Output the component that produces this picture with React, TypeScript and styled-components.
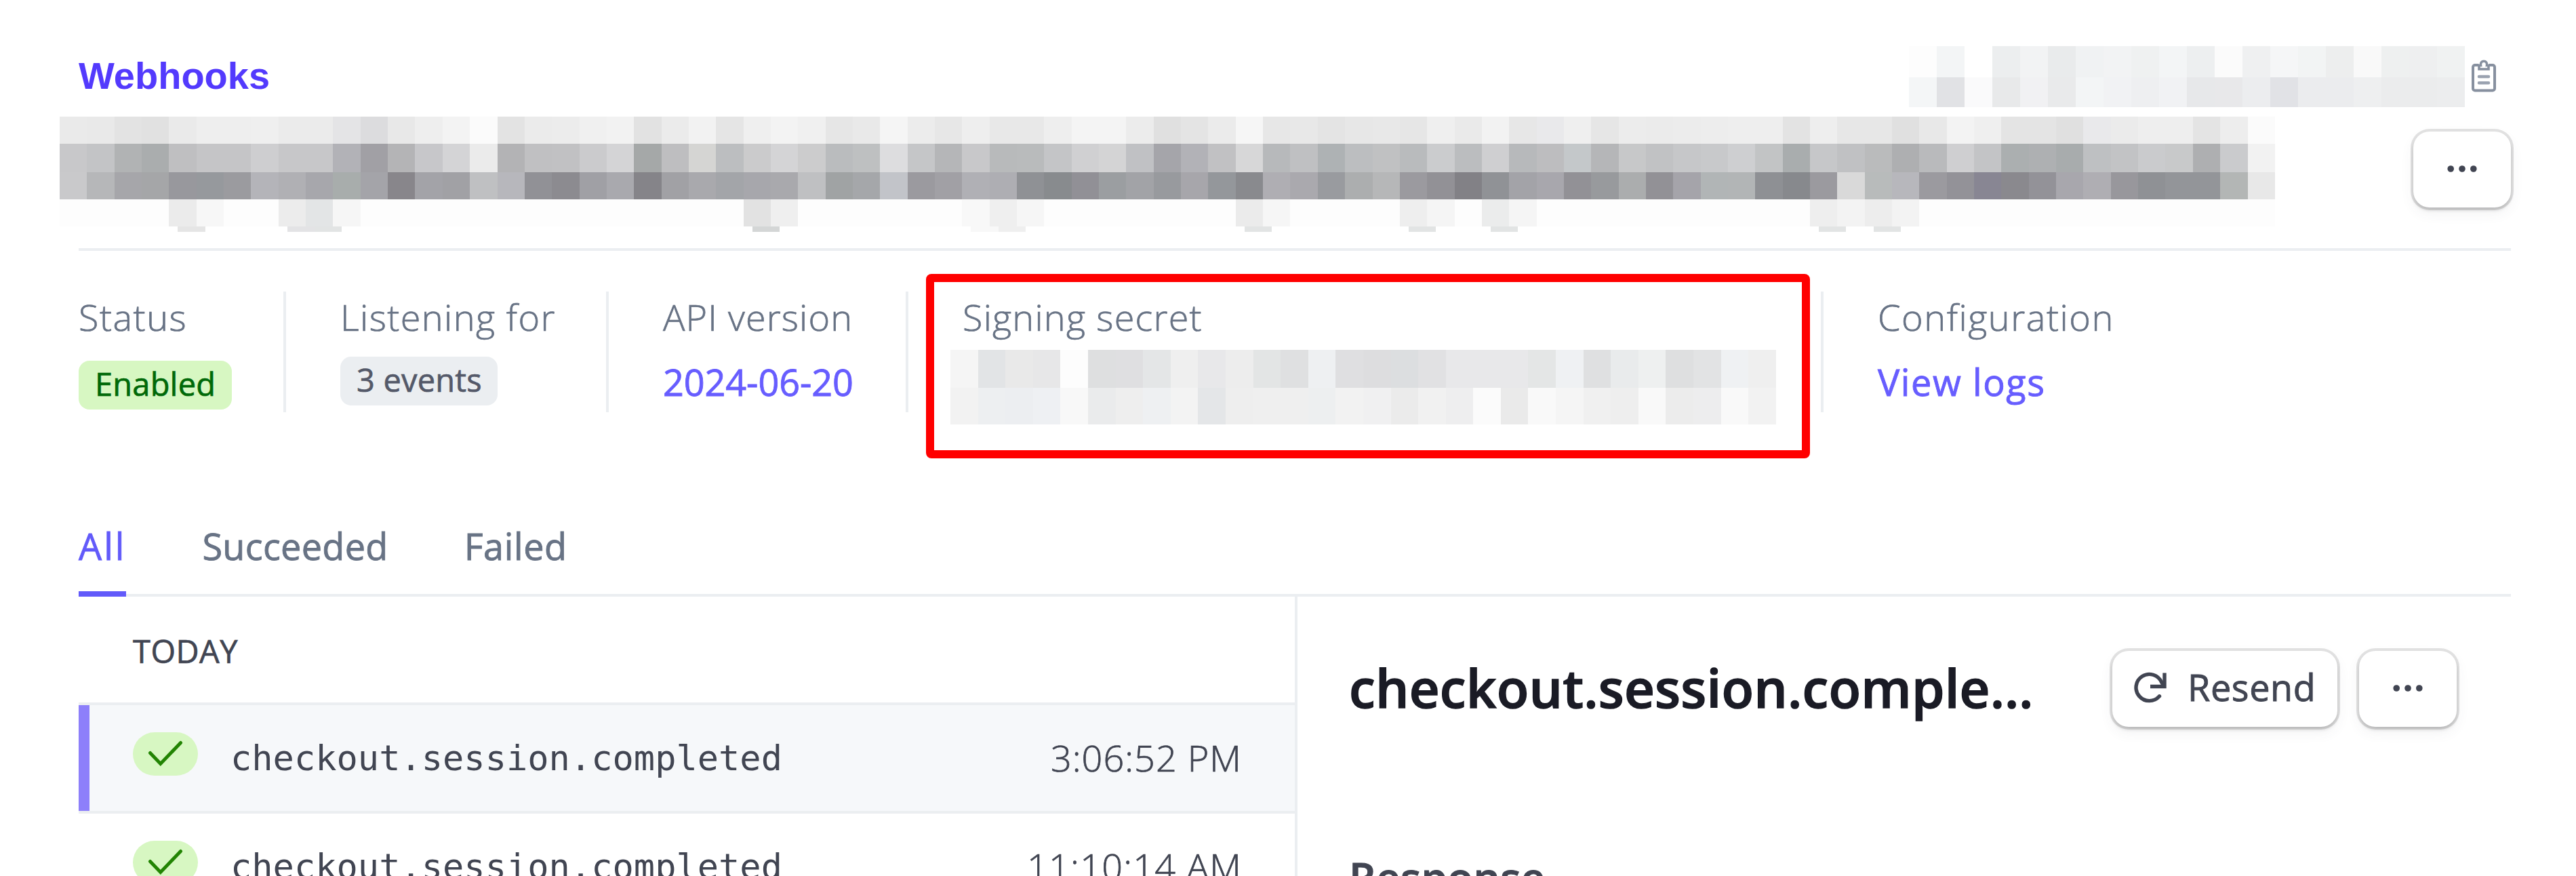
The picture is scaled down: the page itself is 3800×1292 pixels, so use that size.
import React from "react";
import styled, { createGlobalStyle } from "styled-components";

const SANS = `"Open Sans", "Noto Sans", sans-serif`;
const MONO = `"DejaVu Sans Mono", monospace`;
const LINE = "#ebeef1";

const GlobalStyle = createGlobalStyle`
  *, *::before, *::after { box-sizing: border-box; }
  body { margin: 0; background: #fff; }
`;

const Page = styled.div`
  width: 3800px;
  height: 1292px;
  overflow: hidden;
  padding: 68px 96px 0 116px;
  background: #fff;
  color: #414552;
  font-family: ${SANS};
`;

/* ---------- redacted values ---------- */

const Mosaic = styled.div<{ $width: number; $pull?: number; $top?: number }>`
  flex: none;
  width: ${(p) => p.$width}px;
  margin-left: ${(p) => p.$pull ?? 0}px;
  margin-top: ${(p) => p.$top ?? 0}px;
`;

const MosaicRow = styled.div<{ $height: number; $shift?: number }>`
  display: flex;
  height: ${(p) => p.$height}px;
  margin-left: ${(p) => p.$shift ?? 0}px;
  margin-right: -${(p) => p.$shift ?? 0}px;
`;

const Tile = styled.div.attrs<{ $tone: string }>((p) => ({
  style: { backgroundColor: p.$tone },
}))<{ $tone: string }>`
  flex: 1 1 0;
`;

type Band = { height: number; tones: string[]; shift?: number };

const parse = (s: string) =>
  s.trim().split(/\s+/).map((t) => `#${t.length === 2 ? t + t + t : t}`);

const sparse = (count: number, base: string, marks: Record<number, string>) =>
  Array.from({ length: count }, (_, i) => marks[i] ?? base);

function Redacted({ bands, width, pull, top }: { bands: Band[]; width: number; pull?: number; top?: number }) {
  return (
    <Mosaic $width={width} $pull={pull} $top={top} aria-hidden>
      {bands.map((b, r) => (
        <MosaicRow key={r} $height={b.height} $shift={b.shift}>
          {b.tones.map((t, i) => (
            <Tile key={i} $tone={t} />
          ))}
        </MosaicRow>
      ))}
    </Mosaic>
  );
}

const idBands: Band[] = [
  { height: 46, tones: parse("fd f3f5f6 ff eceeef f2f3f4 e9ebec f0f2f3 f2f3f4 eff1f1 f3f5f6 edeff0 fb eff0f1 f5f6f7 f2f4f4 edeeee f9 eef0f0 eeeff0 f0f2f2") },
  { height: 44, tones: parse("f4f6f7 e1e2e5 fafafb e8e9ea f1f1f3 e9eaeb f3f5f6 f1f2f4 eeeff1 f1f2f4 e7e8ea e8e8ea ecedef e1e2e6 ebecee ebecee eeeff0 ebeced ebeced ecedee") },
];

const urlBands: Band[] = [
  { height: 40, tones: parse(`ea e9 e3 e1 ea ee ee ef eb eb e4e4e6 dcdcde e8 ee f3 fb e3 eb ec f0 f2 e2
    eb f2 e5 ef f3 f0 e6 e9 f5 ec e7 ee e8 e8 ee f4 f4 ec e0 e4 eb f6 e7 e8 e4 e7 e8 e6
    ef ea f2 e7 e9e9eb ef e6 ec eb ec ed ee ee e3 ee e7 e7 e0 e8 f3 ef e4 e4 e0 e9e9eb eb ee ee e4 ed fb`) },
  { height: 42, tones: parse(`c8c8ca c3c4c6 b1b3b4 aaadae bfbfc1 c5c5c7 c5c5c7 ceced0 c7c7c9 c7c7c9 b2b2b7 a1a0a5 b4b4b6 c7c7ca d4d4d6 eb b3b3b5 c0c0c2 c1c1c3 cbcbcd d4d4d6 a5a8a8
    bebec0 d5d5d3 bcbec0 cbcbcc d4d4d6 cccccd babcbe bec0c1 dddddf c5c6c8 b5b6b8 c8c8ca b8babb b9bbbc c4c5c7 d0d0d2 d4d4d5 c0c1c4 a5a5aa b2b2b7 c1c1c3 d7d7d8 b7b9bb bfc0c2 aeb2b4 bcbec0 c0c1c2 b9bbbd
    cbccce bbbdbf cfcfd1 b7b9bb bdbdbf c4c8ca b5b6b8 c7c8c9 c1c2c4 c6c7c9 c8c9cb cecfd1 c2c4c5 a9adae c6c7c9 c0c1c3 babbbc aeafb1 b9babc cfcfd1 c3c4c6 abafb0 aeb0b2 a8acad bec0c2 c2c3c5 cacbcd c8c9ca aeafb1 cacbcd f2`) },
  { height: 40, tones: parse(`c9c9cb b6b7b9 a6a6aa a5a6a8 98989d 96999d 9b9b9f b4b4b9 b0b0b4 a7a7ac a8adac a4a4a9 88868b a3a3a8 a1a1a5 bfc0c2 b7b7bc 919196 8c8b90 a0a0a5 a9a9ae 858489
    a1a1a5 a9a9ad a3a5a9 a7a7ac a9a9ad bfc0c2 a0a3a4 a5a7aa c2c4c9 9b9a9f a1a0a5 b0b0b5 aeaeb3 8f9195 888b8e 919096 9b9ea1 a2a3a7 989a9e a7a6ab 94979b 898a8e afaeb3 aaa9ae 999b9f acaeaf b6b7b8 9b9a9f
    929196 828186 909296 a3a3a8 a8a7ad 929196 989a9d abadae 929196 a5a4aa b1b5b6 b2b5b6 8e9094 87898d 9b9a9f d9 b8bbbb b7b7bc 9b9a9f 939298 888693 8a898e 939298 a8a7ad afaeb3 98979c 8f9195 939599 939599 b3b6b5 e8`) },
  { height: 40, tones: sparse(81, "#fdfdfd", { 4: "#ebebeb", 5: "#f7f7f7", 8: "#ececec", 9: "#e3e5e6", 10: "#f6f6f6", 25: "#e2e2e2", 26: "#efefef", 33: "#f8f8f8", 34: "#efefef", 35: "#f6f6f6", 43: "#ebebeb", 44: "#f6f6f6", 49: "#eeeeee", 50: "#f5f5f5", 52: "#ebecec", 53: "#f5f5f5", 64: "#eeeeee", 65: "#f3f3f3", 66: "#ededed", 67: "#f3f3f3" }) },
  { height: 8, shift: 13, tones: sparse(81, "#ffffff", { 4: "#e5e5e5", 8: "#e3e3e5", 9: "#e2e4e4", 25: "#d4d6d6", 33: "#f8f8f8", 34: "#efefef", 43: "#e2e4e4", 49: "#e2e4e4", 52: "#e2e4e4", 64: "#e2e4e4", 66: "#e2e4e4" }) },
];

const secretBands: Band[] = [
  { height: 56, tones: parse("f5 e2e4e6 e9 e7e7e8 fd dedfe0 dfdfe1 e4e6e7 ef e8e8ea ed e3e5e5 dfe0e1 eef0f2 dfdfe1 dddddf dcdee0 e1e1e3 e8e8ea e8e8ea e8e8ea e4e6e6 eff1f3 dfe0e1 e9ebec eef0f0 dedfe0 e2e3e4 eff1f3 ef") },
  { height: 54, tones: parse("f2 edeff1 eceef1 eef0f3 f8 eaebec ee eef0f2 f3 e4e6e8 ee ef ef edeff0 f2 f0f0f1 eb f1 eeeeef fb ea f9 f5 f0 ee f9 ec ededee f9 f2") },
];

/* ---------- header ---------- */

const TopRow = styled.header`
  display: flex;
  align-items: center;
  justify-content: space-between;
  height: 90px;
`;

const Breadcrumb = styled.a`
  padding-bottom: 2px;
  color: #533afd;
  font: 700 56px/80px "Liberation Sans", Arial, sans-serif;
`;

const IdGroup = styled.div`
  display: flex;
  align-items: center;
  gap: 10px;
  padding-right: 22px;
`;

const CopyIcon = styled.svg`
  display: block;
  width: 36px;
  height: 48px;
  margin-bottom: 2px;
`;

const TitleRow = styled.div`
  display: flex;
  align-items: flex-start;
  justify-content: space-between;
  height: 198px;
  margin-top: 14px;
  border-bottom: 4px solid ${LINE};
`;

const Button = styled.button<{ $width: number; $drop?: number }>`
  display: flex;
  flex: none;
  align-items: center;
  justify-content: ${(p) => (p.$width > 200 ? "flex-start" : "center")};
  gap: 31px;
  width: ${(p) => p.$width}px;
  height: 112px;
  margin: ${(p) => p.$drop ?? 0}px 0 0;
  padding: 0 ${(p) => (p.$width > 200 ? 32 : 0)}px;
  border: 0;
  border-radius: 24px;
  background: #fff;
  color: #414552;
  font: 500 54px/80px ${SANS};
  letter-spacing: 0.6px;
  -webkit-text-stroke: 0.9px currentColor;
  box-shadow:
    0 0 0 4px rgba(0, 0, 0, 0.11),
    0 4px 5px rgba(0, 0, 0, 0.14),
    0 8px 20px rgba(64, 68, 82, 0.07);
`;

const ButtonLabel = styled.span`
  padding-bottom: 6px;
`;

const DotsIcon = styled.svg`
  display: block;
  width: 48px;
  height: 12px;
  margin-bottom: 2px;
`;

const ResendIcon = styled.svg`
  display: block;
  flex: none;
  width: 48px;
  height: 48px;
  margin-bottom: 4px;
`;

/* ---------- summary ---------- */

const Summary = styled.section`
  display: flex;
  height: 178px;
  margin-top: 60px;
`;

const Fact = styled.div<{ $width: number; $first?: boolean; $last?: boolean }>`
  position: relative;
  display: flex;
  flex: none;
  flex-direction: column;
  align-items: flex-start;
  width: ${(p) => p.$width}px;
  padding-left: ${(p) => (p.$first ? 0 : 80)}px;
  border-right: ${(p) => (p.$last ? "0" : `4px solid ${LINE}`)};
`;

const FactLabel = styled.div<{ $track: number }>`
  color: #687385;
  font-size: 54px;
  font-weight: 300;
  line-height: 74px;
  letter-spacing: ${(p) => p.$track}px;
  white-space: nowrap;
  -webkit-text-stroke: 0.7px currentColor;
`;

const FactLink = styled.a<{ $track: number }>`
  margin-top: 19px;
  color: #675dff;
  font-size: 54px;
  line-height: 80px;
  letter-spacing: ${(p) => p.$track}px;
  white-space: nowrap;
  -webkit-text-stroke: 0.9px currentColor;
`;

const Badge = styled.span<{ $width: number; $positive?: boolean }>`
  width: ${(p) => p.$width}px;
  height: 72px;
  margin-top: ${(p) => (p.$positive ? 28 : 22)}px;
  padding: 0 24px 4px;
  border-radius: 16px;
  background: ${(p) => (p.$positive ? "#d7f7c2" : "#ebeef1")};
  color: ${(p) => (p.$positive ? "#006908" : "#545969")};
  font-size: 47px;
  line-height: 68px;
  letter-spacing: 0.2px;
  white-space: nowrap;
  -webkit-text-stroke: 0.7px currentColor;
`;

const Highlight = styled.div`
  position: absolute;
  top: -26px;
  left: 26px;
  width: 1304px;
  height: 272px;
  border: 12px solid #f00;
  border-radius: 8px;
`;

/* ---------- tabs ---------- */

const Tabs = styled.nav`
  display: flex;
  gap: 112px;
  margin-top: 157px;
  border-bottom: 4px solid ${LINE};
`;

const Tab = styled.a<{ $active?: boolean; $track: number }>`
  margin-bottom: -4px;
  padding-bottom: 27px;
  border-bottom: 8px solid ${(p) => (p.$active ? "#625afa" : "transparent")};
  color: ${(p) => (p.$active ? "#625afa" : "#687385")};
  font-size: 54px;
  line-height: 80px;
  letter-spacing: ${(p) => p.$track}px;
  -webkit-text-stroke: 0.9px currentColor;
`;

/* ---------- event list + detail ---------- */

const Split = styled.div`
  display: flex;
  height: 520px;
`;

const EventList = styled.div`
  flex: none;
  width: 1798px;
  border-right: 4px solid ${LINE};
`;

const DayLabel = styled.div`
  height: 160px;
  padding: 4px 0 0 80px;
  border-bottom: 4px solid ${LINE};
  font-size: 47px;
  line-height: 152px;
  letter-spacing: 0.5px;
  -webkit-text-stroke: 0.7px currentColor;
`;

const EventRow = styled.div<{ $selected?: boolean }>`
  display: flex;
  align-items: center;
  height: 160px;
  padding-right: 78px;
  border-bottom: 4px solid ${LINE};
  background: ${(p) => (p.$selected ? "#f6f8fa" : "#fff")};
`;

const Marker = styled.div<{ $selected?: boolean }>`
  align-self: stretch;
  width: 16px;
  margin-right: 64px;
  background: ${(p) => (p.$selected ? "#8d7ffa" : "transparent")};
`;

const StatusPill = styled.div`
  display: flex;
  align-items: center;
  justify-content: center;
  width: 96px;
  height: 64px;
  margin: 0 48px 12px 0;
  border-radius: 32px;
  background: #d7f7c2;
`;

const EventName = styled.span`
  flex: 1;
  font-family: ${MONO};
  font-size: 52px;
  line-height: 80px;
`;

const EventTime = styled.span<{ $track: number }>`
  padding-bottom: 2px;
  font-size: 54px;
  font-weight: 300;
  line-height: 80px;
  letter-spacing: ${(p) => p.$track}px;
  -webkit-text-stroke: 0.7px currentColor;
`;

const Detail = styled.div`
  flex: 1;
  padding: 80px 80px 0 76px;
`;

const DetailHead = styled.div`
  display: flex;
  align-items: center;
  gap: 32px;
  height: 112px;
`;

const DetailTitle = styled.h2`
  flex: 1;
  margin: 0;
  padding-bottom: 4px;
  color: #1a1b25;
  font-size: 78px;
  font-weight: 600;
  line-height: 108px;
  letter-spacing: 0.2px;
  white-space: nowrap;
  -webkit-text-stroke: 1.4px currentColor;
`;

const SectionTitle = styled.h3`
  margin: 176px 0 0;
  font-size: 62px;
  font-weight: 600;
  line-height: 90px;
  letter-spacing: 0.3px;
  -webkit-text-stroke: 1px currentColor;
`;

function Dots() {
  return (
    <DotsIcon viewBox="0 0 48 12" fill="#414552">
      <circle cx="7.2" cy="6" r="4.8" />
      <circle cx="24" cy="6" r="4.8" />
      <circle cx="40.8" cy="6" r="4.8" />
    </DotsIcon>
  );
}

const events = [
  { name: "checkout.session.completed", time: "3:06:52 PM", track: 1, selected: true },
  { name: "checkout.session.completed", time: "11:10:14 AM", track: 1.2, selected: false },
];

export default function App() {
  return (
    <>
      <GlobalStyle />
      <Page>
        <TopRow>
          <Breadcrumb>Webhooks</Breadcrumb>
          <IdGroup>
            <Redacted bands={idBands} width={820} />
            <CopyIcon viewBox="0 0 36 48" fill="none" stroke="#87909f" strokeWidth="4">
              <path d="M10.5 8H5a3 3 0 0 0-3 3v31.500a3 3 0 0 0 3 3h26a3 3 0 0 0 3-3V11a3 3 0 0 0-3-3h-5.500" />
              <path d="M11 8.500h2.500C12.800 4.500 15 2.300 18 2.300s5.200 2.200 4.500 6.200H25v5.500H11z" strokeWidth="3.600" />
              <path d="M11 25h14M11 34.200h14" stroke="#9aa2b0" strokeWidth="4.600" strokeLinecap="round" />
            </CopyIcon>
          </IdGroup>
        </TopRow>

        <TitleRow>
          <Redacted bands={urlBands} width={3268} pull={-28} />
          <Button $width={144} $drop={22}>
            <Dots />
          </Button>
        </TitleRow>

        <Summary>
          <Fact $width={306} $first>
            <FactLabel $track={1.5}>Status</FactLabel>
            <Badge $width={226} $positive>Enabled</Badge>
          </Fact>
          <Fact $width={476}>
            <FactLabel $track={1.4}>Listening for</FactLabel>
            <Badge $width={232}>3 events</Badge>
          </Fact>
          <Fact $width={442}>
            <FactLabel $track={1.1}>API version</FactLabel>
            <FactLink $track={-0.1}>2024-06-20</FactLink>
          </Fact>
          <Fact $width={1350}>
            <FactLabel $track={1.2}>Signing secret</FactLabel>
            <Redacted bands={secretBands} width={1218} pull={-18} top={12} />
            <Highlight />
          </Fact>
          <Fact $width={600} $last>
            <FactLabel $track={1.55}>Configuration</FactLabel>
            <FactLink $track={1.6}>View logs</FactLink>
          </Fact>
        </Summary>

        <Tabs>
          <Tab $active $track={3}>All</Tab>
          <Tab $track={0.3}>Succeeded</Tab>
          <Tab $track={0.6}>Failed</Tab>
        </Tabs>

        <Split>
          <EventList>
            <DayLabel>TODAY</DayLabel>
            {events.map((e) => (
              <EventRow key={e.time} $selected={e.selected}>
                <Marker $selected={e.selected} />
                <StatusPill>
                  <svg width="52" height="40" viewBox="0 0 52 40" fill="none" stroke="#228403" strokeWidth="5">
                    <path d="M3.500 18.500L18.800 34.500L48.500 3.500" strokeLinecap="round" />
                  </svg>
                </StatusPill>
                <EventName>{e.name}</EventName>
                <EventTime $track={e.track}>{e.time}</EventTime>
              </EventRow>
            ))}
          </EventList>
          <Detail>
            <DetailHead>
              <DetailTitle>checkout.session.comple…</DetailTitle>
              <Button $width={332}>
                <ResendIcon viewBox="0 0 48 48" fill="none" stroke="#414552" strokeWidth="5.400">
                  <path d="M37.500 36.800A19.600 19.600 0 1 1 40.500 16L44 22" strokeLinecap="round" />
                  <path d="M45 2.500V22.500H24" />
                </ResendIcon>
                <ButtonLabel>Resend</ButtonLabel>
              </Button>
              <Button $width={144}>
                <Dots />
              </Button>
            </DetailHead>
            <SectionTitle>Response</SectionTitle>
          </Detail>
        </Split>
      </Page>
    </>
  );
}
